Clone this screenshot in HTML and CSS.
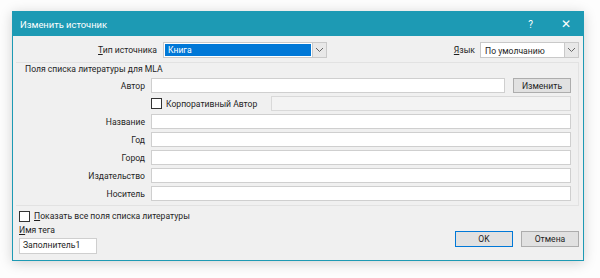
FILE: index.html
```html
<!DOCTYPE html>
<html lang="ru">
<head>
  <meta charset="UTF-8" />
  <title>Изменить источник</title>
  <link rel="stylesheet" href="styles.css">
</head>
<body>
  <div class="dialog">
    <div class="titlebar">
      <span class="title">Изменить источник</span>
      <span class="tb-btn help">?</span>
      <span class="tb-btn close">✕</span>
    </div>

    <div class="content">
      <div class="top-row">
        <label class="lbl type-lbl"><u>Т</u>ип источника</label>
        <div class="select type-select">
          <span class="value selected">Книга</span>
          <span class="arrow"><svg width="9" height="6" viewBox="0 0 9 6"><path d="M1 1 L4.5 4.5 L8 1" fill="none" stroke="#666" stroke-width="1"/></svg></span>
        </div>
        <label class="lbl lang-lbl"><u>Я</u>зык</label>
        <div class="select lang-select">
          <span class="value">По умолчанию</span>
          <span class="arrow"><svg width="9" height="6" viewBox="0 0 9 6"><path d="M1 1 L4.5 4.5 L8 1" fill="none" stroke="#666" stroke-width="1"/></svg></span>
        </div>
      </div>

      <div class="group">
        <div class="legend">Поля списка литературы для MLA</div>
        <div class="fields">
          <label class="lbl">Автор</label>
          <div class="author-row">
            <div class="input"></div>
            <button class="btn edit-btn">Изменить</button>
          </div>

          <span></span>
          <div class="corp-row">
            <span class="check"></span>
            <span class="corp-text">Корпоративный Автор</span>
            <div class="input disabled"></div>
          </div>

          <label class="lbl">Название</label>
          <div class="input"></div>

          <label class="lbl">Год</label>
          <div class="input"></div>

          <label class="lbl">Город</label>
          <div class="input"></div>

          <label class="lbl">Издательство</label>
          <div class="input"></div>

          <label class="lbl">Носитель</label>
          <div class="input"></div>
        </div>
      </div>

      <div class="bottom">
        <div class="bottom-left">
          <div class="show-all">
            <span class="check"></span>
            <span><u>П</u>оказать все поля списка литературы</span>
          </div>
          <div class="tag-lbl"><u>И</u>мя тега</div>
          <div class="input tag-input">Заполнитель1</div>
        </div>
        <div class="actions">
          <button class="btn ok-btn">OK</button>
          <button class="btn">Отмена</button>
        </div>
      </div>
    </div>
  </div>
</body>
</html>
```

FILE: styles.css
```css
:root {
  --title-bg: #1d9ab4;
  --face: #f0f0f0;
  --line: #d6d6d6;
  --btn-face: #e1e1e1;
  --btn-line: #adadad;
  --text: #1e1e1e;
}

* {
  box-sizing: border-box;
  margin: 0;
  padding: 0;
}

body {
  font-family: Roboto, "Noto Sans", sans-serif;
  font-size: 8.6px;
  color: var(--text);
  background: #fdfdfd;
  width: 600px;
  height: 278px;
  overflow: hidden;
}

u {
  text-decoration: underline;
}

/* Dialog window */
.dialog {
  margin: 11px 0 0 12px;
  width: 572px;
  height: 250px;
  background: var(--face);
  border: 1px solid var(--title-bg);
  box-shadow: 0 2px 12px rgba(0,0,0,0.18);
  display: flex;
  flex-direction: column;
}

.titlebar {
  height: 24px;
  background: var(--title-bg);
  color: #fff;
  display: flex;
  align-items: center;
  padding-left: 7px;
  flex-shrink: 0;
}
.title {
  flex: 1;
  font-size: 9.4px;
}
.tb-btn {
  width: 35px;
  text-align: center;
  font-size: 10px;
}
.close {
  font-size: 12px;
}

.content {
  flex: 1;
  display: flex;
  flex-direction: column;
  padding: 6px 4px 0 3px;
}

/* Top row: source type + language */
.top-row {
  display: flex;
  align-items: center;
  height: 16px;
}
.lbl {
  text-align: right;
  white-space: nowrap;
}
.type-lbl {
  width: 141px;
  margin-right: 6px;
}
.lang-lbl {
  margin-left: auto;
  margin-right: 5px;
}

.select {
  height: 16px;
  background: #fff;
  border: 1px solid #c9c9c9;
  display: flex;
}
.select .value {
  flex: 1;
  padding: 0 3px;
  line-height: 14px;
  margin: 1px;
}
.select .value.selected {
  background: #0078d7;
  color: #fff;
  line-height: 12px;
}
.select .arrow {
  width: 14px;
  background: #e8e8e8;
  border-left: 1px solid #c9c9c9;
  display: flex;
  align-items: center;
  justify-content: center;
}
.type-select {
  width: 164px;
}
.lang-select {
  width: 99px;
}

/* Group of bibliography fields */
.group {
  margin-top: 4px;
  border: 1px solid #e2e2e2;
  border-left: none;
  padding: 0 7px 4px 0;
}
.legend {
  padding-left: 9px;
  height: 15px;
  line-height: 13px;
}
.fields {
  display: grid;
  grid-template-columns: 129px 1fr;
  column-gap: 6px;
  row-gap: 3px;
  grid-auto-rows: 15px;
  align-items: center;
}

.input {
  height: 15px;
  background: #fff;
  border: 1px solid #cfcfcf;
  padding-left: 3px;
  line-height: 13px;
}
.input.disabled {
  background: #f3f3f3;
  border-color: #d9d9d9;
}

.author-row {
  display: flex;
  gap: 8px;
}
.author-row .input {
  flex: 1;
}

.corp-row {
  display: flex;
  align-items: center;
  gap: 4px;
}
.corp-row .input {
  flex: 1;
  margin-left: 10px;
}

.check {
  width: 11px;
  height: 11px;
  background: #fff;
  border: 1px solid #333;
  flex-shrink: 0;
}

.btn {
  height: 15px;
  background: var(--btn-face);
  border: 1px solid var(--btn-line);
  font-family: inherit;
  font-size: 8.6px;
  color: var(--text);
  padding: 0;
}
.edit-btn {
  width: 58px;
}

/* Bottom area */
.bottom {
  display: flex;
  justify-content: space-between;
  padding: 4px 0 0 3px;
}
.show-all {
  display: flex;
  align-items: center;
  gap: 4px;
  height: 12px;
}
.tag-lbl {
  margin-top: 2px;
  height: 13px;
  line-height: 13px;
}
.tag-input {
  width: 78px;
  height: 16px;
  margin-top: 1px;
}

.actions {
  display: flex;
  gap: 8px;
  align-items: flex-start;
  padding-top: 21px;
}
.actions .btn {
  width: 58px;
  height: 16px;
}
.ok-btn {
  border-color: #0078d7;
}
```
